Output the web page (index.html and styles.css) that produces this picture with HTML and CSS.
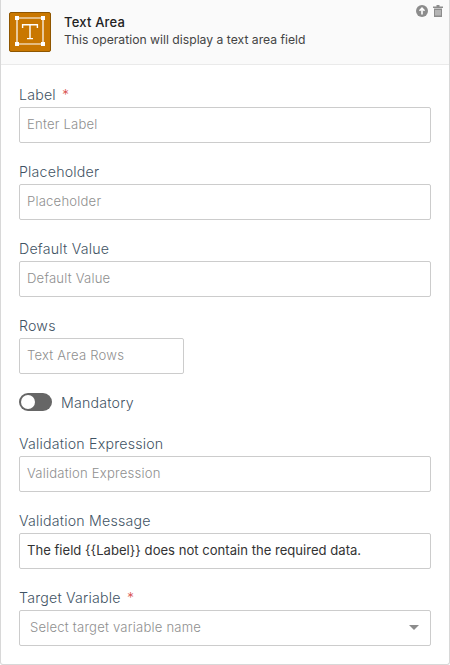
FILE: index.html
```html
<!DOCTYPE html>
<html lang="en">
<head>
    <meta charset="UTF-8">
    <title>Text Area</title>
    <link rel="stylesheet" href="styles.css">
</head>
<body>
    <div class="card">
        <!-- Header -->
        <div class="card-header">
            <div class="op-icon">
                <svg width="34" height="34" viewBox="0 1 34 34">
                    <path d="M4 4H30M4 30H30M4 4V30M30 4V30" fill="none" stroke="#fff" stroke-width="1.2"/>
                    <path d="M2 2h4v4H2zM28 2h4v4h-4zM2 28h4v4H2zM28 28h4v4h-4z" fill="#fff"/>
                    <path d="M9.6 14V10.7H24.4V14M17 10.7V24.6M14 24.6H20" fill="none" stroke="#fff" stroke-width="1.4"/>
                </svg>
            </div>
            <div class="op-text">
                <div class="op-title">Text Area</div>
                <div class="op-desc">This operation will display a text area field</div>
            </div>
            <div class="op-actions">
                <svg width="12" height="12" viewBox="0 0 12 12">
                    <circle cx="6" cy="6" r="6" fill="#8c8c8c"/>
                    <path d="M6 9.5V3.5M3.5 5.8L6 3.2L8.5 5.8" fill="none" stroke="#fff" stroke-width="1.6"/>
                </svg>
                <svg width="10" height="12" viewBox="0 0 10 12">
                    <path d="M0 1.5H10V3H0zM3.5 0H6.5V1.5H3.5z" fill="#8c8c8c"/>
                    <path d="M1 3.5H9V12H1z" fill="#8c8c8c"/>
                    <path d="M3 5V10.5M5 5V10.5M7 5V10.5" stroke="#fff" stroke-width="0.7"/>
                </svg>
            </div>
        </div>

        <!-- Form -->
        <form class="card-body">
            <div class="field">
                <label class="field-label">Label <span class="required">*</span></label>
                <input class="field-input" type="text" placeholder="Enter Label">
            </div>
            <div class="field">
                <label class="field-label">Placeholder</label>
                <input class="field-input" type="text" placeholder="Placeholder">
            </div>
            <div class="field">
                <label class="field-label">Default Value</label>
                <input class="field-input" type="text" placeholder="Default Value">
            </div>
            <div class="field">
                <label class="field-label">Rows</label>
                <input class="field-input field-input-small" type="text" placeholder="Text Area Rows">
            </div>
            <div class="toggle-row">
                <span class="toggle"></span>
                <span class="toggle-label">Mandatory</span>
            </div>
            <div class="field">
                <label class="field-label">Validation Expression</label>
                <input class="field-input" type="text" placeholder="Validation Expression">
            </div>
            <div class="field">
                <label class="field-label">Validation Message</label>
                <input class="field-input" type="text" value="The field {{Label}} does not contain the required data.">
            </div>
            <div class="field">
                <label class="field-label">Target Variable <span class="required">*</span></label>
                <div class="field-select">
                    <span>Select target variable name</span>
                    <span class="caret"></span>
                </div>
            </div>
        </form>
    </div>
</body>
</html>
```

FILE: styles.css
```css
:root {
    --border-color: #ccc;
    --label-color: #3f5364;
    --placeholder-color: #8f8f8f;
}

body {
    margin: 0;
    font-family: Inter, 'Open Sans', Arial, sans-serif;
    font-weight: 300;
    background: #fff;
    color: #333;
}

.card {
    height: 665px;
    box-sizing: border-box;
    border: 1px solid #d8d8d8;
    border-top: none;
    border-radius: 0 0 3px 3px;
    background: #fff;
}

.card-header {
    display: flex;
    height: 65px;
    box-sizing: border-box;
    padding: 12px 0 0 8px;
    background: #fafafa;
    border-bottom: 1px solid #eaeaea;
}

.op-icon {
    display: flex;
    align-items: center;
    justify-content: center;
    width: 42px;
    height: 40px;
    box-sizing: border-box;
    border: 1px solid #8f5600;
    border-radius: 2px;
    background: #c97700;
}

.op-text {
    flex: 1;
    margin-left: 13px;
}

.op-title {
    margin-top: 2px;
    font-size: 13px;
    font-weight: 500;
    letter-spacing: 0.2px;
    line-height: 16px;
    color: #222;
}

.op-desc {
    margin-top: 2px;
    font-size: 12.2px;
    font-weight: 400;
    line-height: 16px;
    color: #444;
}

.op-actions {
    display: flex;
    gap: 5px;
    margin: -7px 6px 0 0;
}

.card-body {
    padding: 20px 18px 0;
}

.field {
    margin-bottom: 19px;
}

.field-label {
    display: block;
    height: 20px;
    margin-bottom: 2px;
    font-size: 14.2px;
    letter-spacing: 0.2px;
    line-height: 20px;
    color: var(--label-color);
}

.required {
    margin-left: 2px;
    color: #d9534f;
}

.field-input, .field-select {
    display: block;
    width: 412px;
    height: 36px;
    box-sizing: border-box;
    padding: 0 7px 2px;
    border: 1px solid var(--border-color);
    border-radius: 2px;
    background: #fff;
    font-family: inherit;
    font-weight: 300;
    font-size: 13.1px;
    color: #333;
}

.field-input[value] {
    font-weight: 400;
}

.field-input::placeholder {
    color: var(--placeholder-color);
    letter-spacing: 0.2px;
    opacity: 1;
}

.field-input-small {
    width: 165px;
}

.field-select {
    display: flex;
    align-items: center;
    justify-content: space-between;
    padding: 0 11px 2px 10px;
    letter-spacing: 0.2px;
    color: var(--placeholder-color);
}

.caret {
    width: 0;
    height: 0;
    border-left: 5px solid transparent;
    border-right: 5px solid transparent;
    border-top: 5px solid #8c8c8c;
}

.toggle-row {
    display: flex;
    align-items: center;
    height: 18px;
    margin: 1px 0 23px;
}

.toggle {
    position: relative;
    width: 33px;
    height: 18px;
    box-sizing: border-box;
    border-radius: 9px;
    background: #666;
}

.toggle::after {
    content: "";
    position: absolute;
    top: 2px;
    left: 2px;
    width: 14px;
    height: 14px;
    border-radius: 50%;
    background: #fff;
}

.toggle-label {
    margin-left: 9px;
    font-size: 14.2px;
    letter-spacing: 0.2px;
    color: var(--label-color);
}
```
